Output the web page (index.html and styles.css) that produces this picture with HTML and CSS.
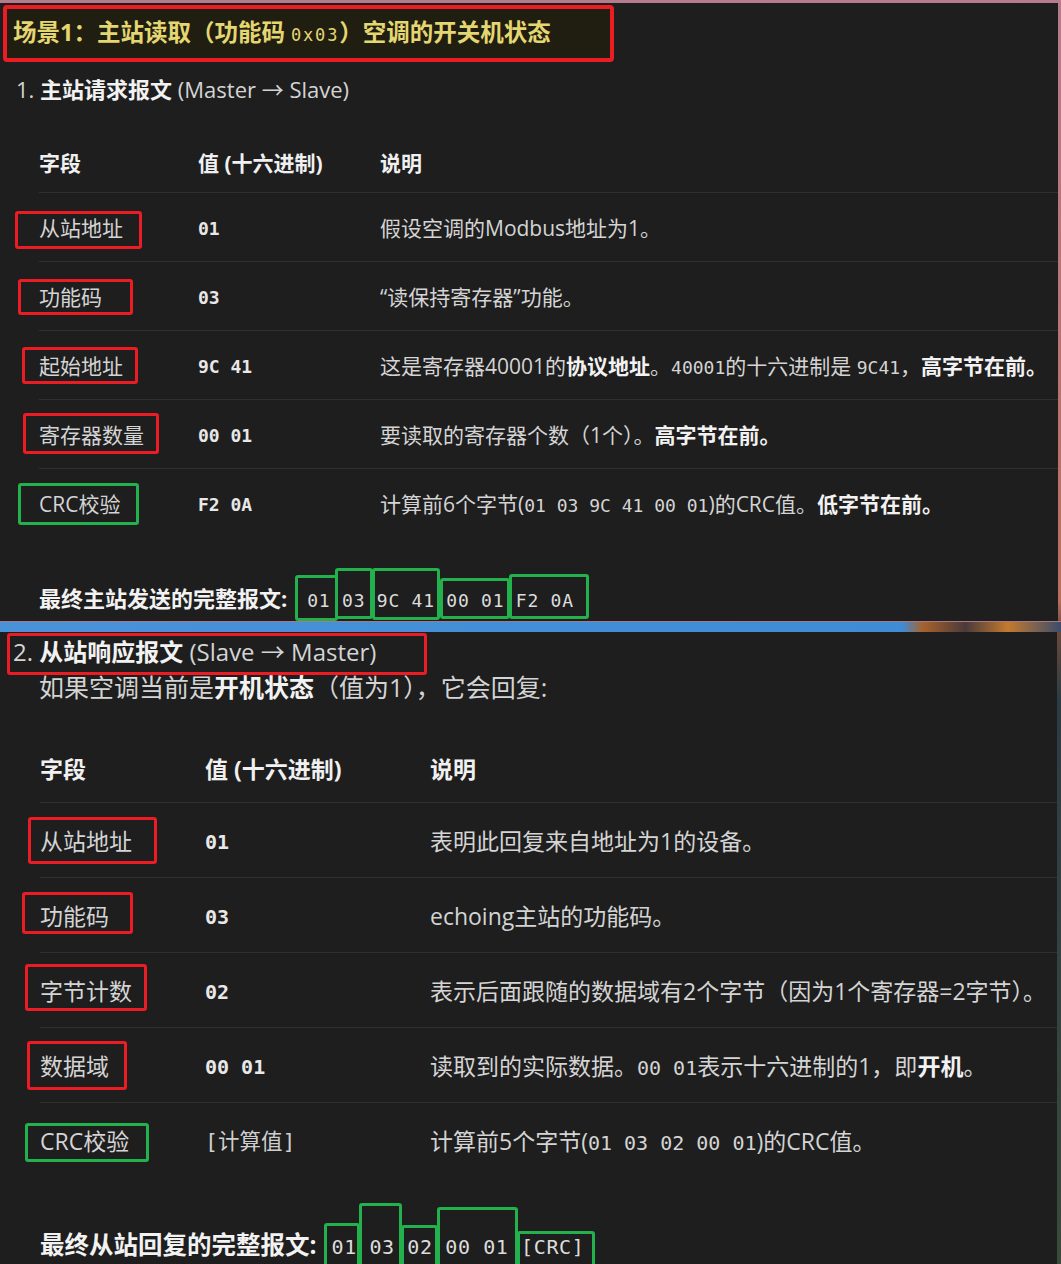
FILE: index.html
```html
<!DOCTYPE html>
<html lang="zh">
<head>
    <meta charset="UTF-8">
    <meta name="viewport" content="width=device-width, initial-scale=1.0">
    <title>Modbus 场景1：读取空调开关机状态</title>
    <link rel="stylesheet" href="styles.css">
</head>
<body>

    <div class="desk">

        <div class="shot shot-top">
            <div class="scene-title">场景1：主站读取（功能码 <code>0x03</code>）空调的开关机状态</div>

            <p class="step">1. <strong>主站请求报文</strong> (Master → Slave)</p>

            <table class="frame">
                <thead>
                    <tr>
                        <th>字段</th>
                        <th>值 (十六进制)</th>
                        <th>说明</th>
                    </tr>
                </thead>
                <tbody>
                    <tr>
                        <td>从站地址</td>
                        <td><code class="val">01</code></td>
                        <td>假设空调的Modbus地址为1。</td>
                    </tr>
                    <tr>
                        <td>功能码</td>
                        <td><code class="val">03</code></td>
                        <td>“读保持寄存器”功能。</td>
                    </tr>
                    <tr>
                        <td>起始地址</td>
                        <td><code class="val">9C 41</code></td>
                        <td>这是寄存器40001的<strong>协议地址</strong>。<code>40001</code>的十六进制是 <code>9C41</code>，<strong>高字节在前。</strong></td>
                    </tr>
                    <tr>
                        <td>寄存器数量</td>
                        <td><code class="val">00 01</code></td>
                        <td>要读取的寄存器个数（1个）。<strong>高字节在前。</strong></td>
                    </tr>
                    <tr>
                        <td>CRC校验</td>
                        <td><code class="val">F2 0A</code></td>
                        <td>计算前6个字节(<code>01 03 9C 41 00 01</code>)的CRC值。<strong>低字节在前。</strong></td>
                    </tr>
                </tbody>
            </table>

            <p class="final"><strong>最终主站发送的完整报文:</strong><code>01 03 9C 41 00 01 F2 0A</code></p>

            <div class="marks">
                <span class="mark t-r1"></span>
                <span class="mark t-r2"></span>
                <span class="mark t-r3"></span>
                <span class="mark t-r4"></span>
                <span class="mark green t-g5"></span>
                <span class="mark green t-c1"></span>
                <span class="mark green t-c2"></span>
                <span class="mark green t-c3"></span>
                <span class="mark green t-c4"></span>
                <span class="mark green t-c5"></span>
            </div>
        </div>

        <div class="seam"></div>

        <div class="shot shot-bottom">
            <p class="step">2. <strong>从站响应报文</strong> (Slave → Master)</p>
            <p class="lead">如果空调当前是<strong>开机状态</strong>（值为1），它会回复:</p>

            <table class="frame">
                <thead>
                    <tr>
                        <th>字段</th>
                        <th>值 (十六进制)</th>
                        <th>说明</th>
                    </tr>
                </thead>
                <tbody>
                    <tr>
                        <td>从站地址</td>
                        <td><code class="val">01</code></td>
                        <td>表明此回复来自地址为1的设备。</td>
                    </tr>
                    <tr>
                        <td>功能码</td>
                        <td><code class="val">03</code></td>
                        <td>echoing主站的功能码。</td>
                    </tr>
                    <tr>
                        <td>字节计数</td>
                        <td><code class="val">02</code></td>
                        <td>表示后面跟随的数据域有2个字节（因为1个寄存器=2字节）。</td>
                    </tr>
                    <tr>
                        <td>数据域</td>
                        <td><code class="val">00 01</code></td>
                        <td>读取到的实际数据。<code>00 01</code>表示十六进制的1，即<strong>开机</strong>。</td>
                    </tr>
                    <tr>
                        <td>CRC校验</td>
                        <td><code class="plain">[计算值]</code></td>
                        <td>计算前5个字节(<code>01 03 02 00 01</code>)的CRC值。</td>
                    </tr>
                </tbody>
            </table>

            <p class="final"><strong>最终从站回复的完整报文:</strong><code>01 03 02 00 01 [CRC]</code></p>

            <div class="marks">
                <span class="mark b-h"></span>
                <span class="mark b-r1"></span>
                <span class="mark b-r2"></span>
                <span class="mark b-r3"></span>
                <span class="mark b-r4"></span>
                <span class="mark green b-g5"></span>
                <span class="mark green b-c1"></span>
                <span class="mark green b-c2"></span>
                <span class="mark green b-c3"></span>
                <span class="mark green b-c4"></span>
                <span class="mark green b-c5"></span>
            </div>
        </div>

    </div>

</body>
</html>
```

FILE: styles.css
```css
body {
    margin: 0;
    font-family: "Open Sans", "Noto Sans CJK SC", sans-serif;
    color: #d4d4d4;
    background-color: #1e1e1e;
}
code {
    font-family: "DejaVu Sans Mono", "Noto Sans CJK SC", monospace;
}
strong {
    color: #f2f2f2;
    font-weight: bold;
}
.desk {
    height: 1264px;
    overflow: hidden;
    padding-top: 3px;
    box-sizing: border-box;
    background: linear-gradient(180deg, #b47c8c 0, #b8705e 600px, #6a4a3a 630px, #2c3c44 700px, #3a4a3c 1264px);
}
.shot {
    position: relative;
    overflow: hidden;
    background-color: #1e1e1e;
}
.shot-top {
    width: 1058px;
    height: 618px;
    font-size: 21px;
}
.shot-bottom {
    width: 1057px;
    height: 632px;
    font-size: 23px;
}
.seam {
    height: 11px;
    border-top: 1px solid #a87884;
    box-sizing: border-box;
    background: linear-gradient(90deg, #4a92d8 0, #3f8bd6 85%, #a7622c 87%, #4a3a3a 91%, #c27a30 95%, #3c4c6c 100%);
}

/* heading of the scene */
.scene-title {
    margin: 2px 0 0 3px;
    width: 611px;
    height: 57px;
    box-sizing: border-box;
    border: 4px solid #ec1c24;
    border-radius: 4px;
    background-color: #1f1e11;
    padding-left: 6px;
    line-height: 46px;
    font-size: 23.5px;
    font-weight: bold;
    color: #e4d671;
    white-space: nowrap;
}
.scene-title code {
    font-size: 17px;
    font-weight: normal;
    letter-spacing: 1.8px;
}

.step {
    margin: 0;
    white-space: nowrap;
}
.shot-top .step {
    margin: 12px 0 0 16px;
    font-size: 22px;
    line-height: 30px;
}
.shot-bottom .step {
    padding: 3px 0 0 13px;
    height: 35px;
    font-size: 24px;
    line-height: 34px;
}
.lead {
    margin: 0 0 0 39px;
    font-size: 25px;
    line-height: 34px;
}

/* field tables */
.frame {
    border-collapse: collapse;
    table-layout: fixed;
    white-space: nowrap;
}
.frame th, .frame td {
    padding: 0;
    text-align: left;
    vertical-align: middle;
    overflow: visible;
}
.frame th {
    color: #f0f0f0;
    font-weight: bold;
    border-bottom: 1px solid #303030;
}
.frame tbody tr {
    border-bottom: 1px solid #303030;
}
.frame tbody tr:last-child {
    border-bottom: none;
}
.frame .val {
    font-weight: bold;
    color: #e8e8e8;
}
.frame .plain {
    color: #cfcfcf;
}

.shot-top .frame {
    margin: 27px 0 0 39px;
    width: 1019px;
}
.shot-top .frame th {
    height: 61px;
}
.shot-top .frame td {
    height: 68px;
}
.shot-top .frame th:nth-child(1) { width: 159px; }
.shot-top .frame th:nth-child(2) { width: 182px; }
.shot-top .frame code {
    font-size: 18px;
}

.shot-bottom .frame {
    margin: 29px 0 0 40px;
    width: 1017px;
}
.shot-bottom .frame th {
    height: 69px;
}
.shot-bottom .frame td {
    height: 74px;
}
.shot-bottom .frame th:nth-child(1) { width: 165px; }
.shot-bottom .frame th:nth-child(2) { width: 225px; }
.shot-bottom .frame code {
    font-size: 20px;
}
.shot-bottom .frame .plain {
    font-size: 21.5px;
}

/* complete frame line */
.final {
    margin: 0;
    white-space: nowrap;
}
.final code {
    color: #dcdcdc;
}
.shot-top .final {
    margin: 46px 0 0 39px;
    font-size: 22px;
    line-height: 30px;
}
.shot-top .final code {
    margin-left: 20px;
    font-size: 18px;
    letter-spacing: 0.75px;
}
.shot-bottom .final {
    margin: 51px 0 0 40px;
    font-size: 24.5px;
    line-height: 34px;
}
.shot-bottom .final code {
    margin-left: 15px;
    font-size: 20px;
    letter-spacing: 0.6px;
}

/* hand drawn annotation boxes */
.marks {
    position: absolute;
    inset: 0;
    pointer-events: none;
}
.mark {
    position: absolute;
    box-sizing: border-box;
    border: 3px solid #ec1c24;
    border-radius: 3px;
}
.mark.green {
    border-color: #22b14c;
}

.t-r1 { left: 15px; top: 208px; width: 127px; height: 38px; }
.t-r2 { left: 18px; top: 276px; width: 115px; height: 36px; }
.t-r3 { left: 22px; top: 344px; width: 116px; height: 37px; }
.t-r4 { left: 23px; top: 410px; width: 136px; height: 41px; }
.t-g5 { left: 18px; top: 480px; width: 121px; height: 42px; }
.t-c1 { left: 295px; top: 572px; width: 43px; height: 46px; }
.t-c2 { left: 335px; top: 565px; width: 38px; height: 51px; }
.t-c3 { left: 372px; top: 565px; width: 68px; height: 52px; }
.t-c4 { left: 440px; top: 575px; width: 70px; height: 41px; }
.t-c5 { left: 509px; top: 571px; width: 80px; height: 45px; }

.b-h { left: 7px; top: 1px; width: 420px; height: 42px; }
.b-r1 { left: 28px; top: 185px; width: 129px; height: 47px; }
.b-r2 { left: 22px; top: 260px; width: 111px; height: 42px; }
.b-r3 { left: 25px; top: 332px; width: 122px; height: 47px; }
.b-r4 { left: 27px; top: 409px; width: 100px; height: 49px; }
.b-g5 { left: 25px; top: 491px; width: 124px; height: 39px; }
.b-c1 { left: 324px; top: 591px; width: 36px; height: 80px; }
.b-c2 { left: 359px; top: 571px; width: 43px; height: 80px; }
.b-c3 { left: 401px; top: 593px; width: 37px; height: 80px; }
.b-c4 { left: 437px; top: 575px; width: 81px; height: 80px; }
.b-c5 { left: 517px; top: 599px; width: 78px; height: 80px; }
```
